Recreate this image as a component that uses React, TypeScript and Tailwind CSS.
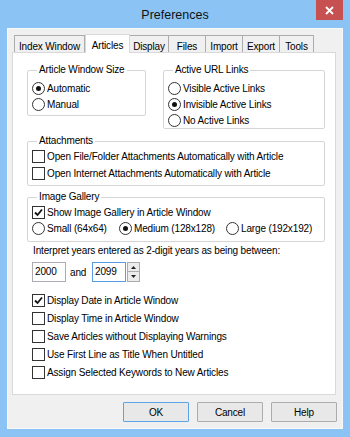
import React from "react";

const font = { fontFamily: '"Liberation Sans", Arial, sans-serif' };

function Radio({ checked, label, className = "" }: { checked?: boolean; label: string; className?: string }) {
  return (
    <div className={`flex items-center h-[16px] ${className}`}>
      <span className="w-[13px] h-[13px] rounded-full border border-[#333] bg-white flex items-center justify-center shrink-0">
        {checked && <span className="w-[5px] h-[5px] rounded-full bg-[#111]" />}
      </span>
      <span className="ml-[2px] whitespace-nowrap">{label}</span>
    </div>
  );
}

function Check({ checked, label, h = "h-[17px]" }: { checked?: boolean; label: string; h?: string }) {
  return (
    <div className={`flex items-center ${h}`}>
      <span className="w-[13px] h-[13px] border border-[#333] bg-white flex items-center justify-center shrink-0">
        {checked && (
          <svg width="9" height="9" viewBox="0 0 9 9">
            <path d="M1 4.5 L3.5 7 L8 1.5" stroke="#111" strokeWidth="1.8" fill="none" />
          </svg>
        )}
      </span>
      <span className="ml-[2px] whitespace-nowrap">{label}</span>
    </div>
  );
}

function Group({ title, className, children }: { title: string; className: string; children: React.ReactNode }) {
  return (
    <fieldset className={`border border-[#d5d5d5] rounded-[2px] pl-[4px] ${className}`}>
      <legend className="ml-[5px] px-[2px] h-[14px] leading-[14px] whitespace-nowrap">{title}</legend>
      {children}
    </fieldset>
  );
}

const tabs = ["Index Window", "Articles", "Display", "Files", "Import", "Export", "Tools"];
const tabW = [71, 45, 40, 38, 38, 38, 35];

export default function App() {
  return (
    <div className="w-[350px] h-[437px] bg-[#8bc4f4] flex flex-col text-[10px] tracking-[-0.15px] text-black" style={font}>
      {/* title bar */}
      <div className="h-[28px] relative flex justify-center">
        <span className="mt-[6px] text-[12.5px] tracking-normal text-[#111]">Preferences</span>
        <div className="absolute right-[7px] top-0 w-[27px] h-[20px] bg-[#c75050] flex items-center justify-center">
          <svg width="9" height="9" viewBox="0 0 9 9">
            <path d="M1 1 L8 8 M8 1 L1 8" stroke="#fff" strokeWidth="1.8" />
          </svg>
        </div>
      </div>

      {/* client */}
      <div className="mx-[7px] h-[401px] bg-[#f0f0f0] border border-[#f7f9fb] flex flex-col">
        {/* tabs */}
        <div className="flex items-end h-[23px] pl-[6px]">
          {tabs.map((t, i) =>
            i === 1 ? (
              <div
                key={t}
                className="h-[19px] bg-white border border-b-0 border-[#d9d9d9] -mb-px relative z-10 flex justify-center pt-[3px]"
                style={{ width: tabW[i] }}
              >
                {t}
              </div>
            ) : (
              <div
                key={t}
                className="h-[17px] bg-[#f0f0f0] border border-b-0 border-[#acacac] flex justify-center pt-[3px] -ml-px first:ml-0"
                style={{ width: tabW[i] }}
              >
                {t}
              </div>
            )
          )}
        </div>

        {/* panel */}
        <div className="ml-[4px] w-[324px] h-[343px] bg-white border border-[#d9d9d9] pt-[10px] pl-[14px] flex flex-col">
          <div className="flex items-start gap-[17px]">
            <Group title="Article Window Size" className="w-[119px] h-[53px]">
              <div className="pt-[3px]">
                <Radio checked label="Automatic" />
                <Radio label="Manual" />
              </div>
            </Group>
            <Group title="Active URL Links" className="w-[162px] h-[66px]">
              <div className="pt-[3px]">
                <Radio label="Visible Active Links" />
                <Radio checked label="Invisible Active Links" />
                <Radio label="No Active Links" />
              </div>
            </Group>
          </div>

          <Group title="Attachments" className="mt-[5px] w-[298px] h-[52px]">
            <Check label="Open File/Folder Attachments Automatically with Article" />
            <Check label="Open Internet Attachments Automatically with Article" />
          </Group>

          <Group title="Image Gallery" className="mt-[4px] w-[298px] h-[52px]">
            <Check checked label="Show Image Gallery in Article Window" h="h-[16px]" />
            <div className="flex">
              <Radio label="Small (64x64)" className="w-[87px]" />
              <Radio checked label="Medium (128x128)" className="w-[107px]" />
              <Radio label="Large (192x192)" />
            </div>
          </Group>

          <div className="mt-[2px] pl-[6px] h-[14px] leading-[14px]">Interpret years entered as 2-digit years as being between:</div>

          <div className="mt-[4px] pl-[5px] flex items-center h-[20px]">
            <div className="w-[34px] h-[20px] border border-[#abadb3] bg-white pl-[2px] leading-[18px]">2000</div>
            <span className="ml-[4px] w-[22px]">and</span>
            <div className="w-[34px] h-[20px] border border-[#569de5] bg-white pl-[2px] leading-[18px]">2099</div>
            <div className="ml-[1px] w-[13px] h-[20px] flex flex-col">
              <div className="h-[10px] border border-[#acacac] bg-[#ececec] flex items-center justify-center">
                <svg width="5" height="3" viewBox="0 0 5 3"><path d="M0 3 L2.5 0 L5 3Z" fill="#222" /></svg>
              </div>
              <div className="h-[10px] border border-t-0 border-[#acacac] bg-[#ececec] flex items-center justify-center">
                <svg width="5" height="3" viewBox="0 0 5 3"><path d="M0 0 L2.5 3 L5 0Z" fill="#222" /></svg>
              </div>
            </div>
          </div>

          <div className="mt-[9px] pl-[5px] flex flex-col">
            <Check checked label="Display Date in Article Window" h="h-[18px]" />
            <Check label="Display Time in Article Window" h="h-[18px]" />
            <Check label="Save Articles without Displaying Warnings" h="h-[18px]" />
            <Check label="Use First Line as Title When Untitled" h="h-[18px]" />
            <Check label="Assign Selected Keywords to New Articles" h="h-[18px]" />
          </div>
        </div>

        {/* buttons */}
        <div className="flex justify-end gap-[8px] pr-[5px] mt-[7px]">
          <button className="w-[66px] h-[20px] border border-[#5ca4e6] bg-[#e8e8e8] rounded-[1px]">OK</button>
          <button className="w-[66px] h-[20px] border border-[#acacac] bg-[#e8e8e8] rounded-[1px]">Cancel</button>
          <button className="w-[66px] h-[20px] border border-[#acacac] bg-[#e8e8e8] rounded-[1px]">Help</button>
        </div>
      </div>
    </div>
  );
}
